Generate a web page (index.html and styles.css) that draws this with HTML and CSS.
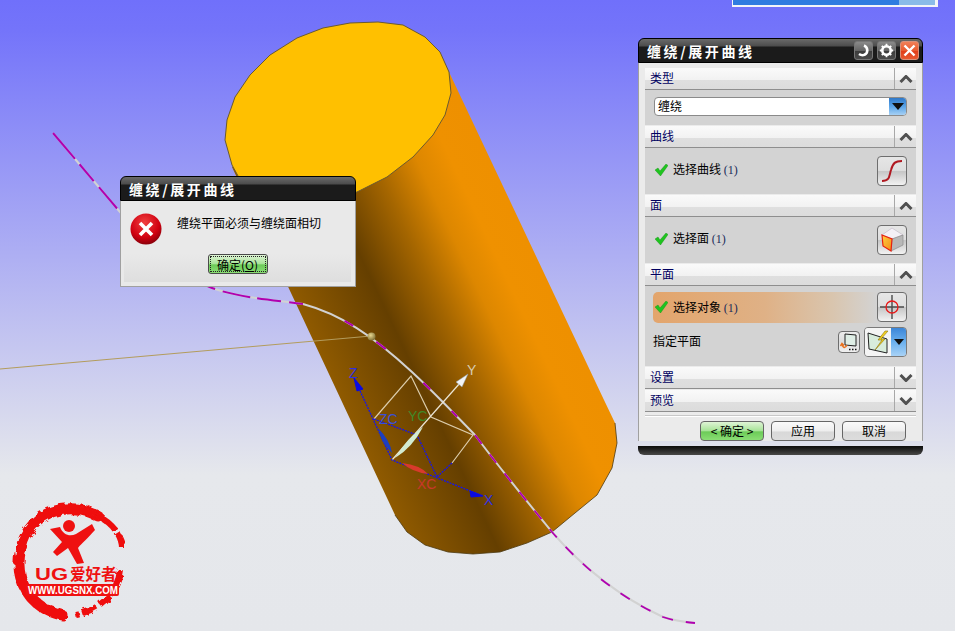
FILE: index.html
```html
<!DOCTYPE html>
<html lang="zh">
<head>
<meta charset="utf-8">
<title>缠绕/展开曲线</title>
<link rel="stylesheet" href="styles.css">
</head>
<body>
<main class="viewport">
  <svg class="scene" width="955" height="631" viewBox="0 0 955 631">
    <defs>
      <linearGradient id="bodyShade" gradientUnits="userSpaceOnUse" x1="289" y1="288" x2="503" y2="187">
        <stop offset="0" stop-color="#8f5a00"/>
        <stop offset=".33" stop-color="#653f00"/>
        <stop offset=".55" stop-color="#a56600"/>
        <stop offset=".72" stop-color="#dd8700"/>
        <stop offset=".85" stop-color="#ef9100"/>
        <stop offset="1" stop-color="#ee9000"/>
      </linearGradient>
      <radialGradient id="ball" cx=".4" cy=".35" r=".7">
        <stop offset="0" stop-color="#e8d890"/>
        <stop offset="1" stop-color="#7a6a30"/>
      </radialGradient>
      <filter id="rough" x="-10%" y="-10%" width="120%" height="120%">
        <feTurbulence type="fractalNoise" baseFrequency=".16" numOctaves="2" seed="4"/>
        <feDisplacementMap in="SourceGraphic" scale="6"/>
      </filter>
    </defs>

    <!-- cylinder -->
    <path class="cyl-body" d="M449 72 L604 400 L615 423 L617 443 L612 468 L597 495 L575 513 L552 532 L527 543 L500 552 L473 554 L448 552 L425 545 L407 532 L395 515 L380 483 L232 167 Z"/>
    <path class="cyl-rim" d="M615 423 L617 443 L612 468 L597 495 L575 513 L552 532 L527 543 L500 552 L473 554 L448 552 L425 545 L407 532 L395 515"/>
    <path class="cyl-top" d="M225 140 L227 120 L235 97 L250 75 L270 55 L297 38 L323 28 L350 23 L378 22 L403 25 L425 37 L440 52 L449 72 L451 93 L445 115 L433 135 L413 157 L387 177 L357 192 L320 202 L285 204 L262 198 L243 185 L232 165 Z"/>

    <!-- sketch line and curve -->
    <path class="ray" d="M0 369 L371 336"/>
    <path class="curve-base" d="M53 133 L120 212 C150 245 190 280 212 288 C240 298 275 300 303 304 C340 314 372 335 412 372 C440 398 460 420 475 435 C505 475 530 505 552 532 C585 570 620 597 663 617 C675 621 685 622 695 623"/>
    <path class="curve-left" d="M53 133 L120 212 C150 245 190 280 212 288 C240 298 275 300 303 304"/>
    <path class="curve-mid" d="M303 304 C340 314 372 335 412 372 C440 398 460 420 475 435"/>
    <path class="curve-right" d="M475 435 C505 475 530 505 552 532 C585 570 620 597 663 617 C675 621 685 622 695 623"/>
    <circle cx="371.500" cy="336.500" r="4" fill="url(#ball)"/>

    <!-- datum triad -->
    <path class="wire" d="M374 419 L411 376 L431 417 L473 435 L452 463"/>
    <path class="y-axis" d="M392 460 L460 383"/>
    <path class="blue-dash" d="M355 380 L392 460 L483 496 M374 419 L417 435 L437 477 L452 463"/>
    <path class="leaf-blue" d="M378 428 Q390 440 392 453 Q381 443 378 428 Z"/>
    <path class="leaf-green" d="M395 458 Q408 437 423 427 Q412 448 395 458 Z"/>
    <path class="leaf-red" d="M402 463 Q420 465 428 474 Q412 472 402 463 Z"/>
    <path class="tip-blue" d="M354 378 L363 389 L357 391 Z M470 491 L483 496 L471 497 Z"/>
    <path class="tip-white" d="M468 374 L462 387 L456 382 Z"/>
    <text class="axis-text axis-blue" x="349" y="378">Z</text>
    <text class="axis-text axis-zc" x="379" y="424">ZC</text>
    <text class="axis-text axis-green" x="408" y="421">YC</text>
    <text class="axis-text axis-red" x="417" y="489">XC</text>
    <text class="axis-text axis-blue" x="484" y="505">X</text>
    <text class="axis-text axis-tan" x="467" y="375">Y</text>

    <!-- watermark logo -->
    <g class="logo">
      <path class="logo-ring" filter="url(#rough)" d="M98 516 C70 500 30 510 21 548 C13 580 30 608 62 615"/>
      <path class="logo-ring-thin" filter="url(#rough)" d="M80 510 C105 514 122 532 122 548 M120 570 C118 592 100 610 76 615"/>
      <circle class="logo-mark" cx="69" cy="526" r="6"/>
      <path class="logo-mark" d="M50 529 L60 527 C63 535 70 537 76 534 L92 524 L95 530 C88 538 82 543 78 548 L84 563 L77 564 L68 548 L57 556 L53 552 L62 542 Z"/>
      <text class="logo-ug" x="35" y="580" textLength="33" lengthAdjust="spacingAndGlyphs">UG</text>
      <text class="logo-name" x="70" y="580">爱好者</text>
      <rect class="logo-band" x="26" y="584" width="93" height="12" rx="2"/>
      <text class="logo-url" x="28" y="594" textLength="90" lengthAdjust="spacingAndGlyphs">WWW.UGSNX.COM</text>
    </g>

    <!-- clipped window at the top edge -->
    <rect class="strip-frame" x="732" y="0" width="206" height="7"/>
    <rect class="strip-blue" x="733" y="0" width="166" height="5"/>
    <rect class="strip-sky" x="899" y="0" width="36" height="5"/>
  </svg>

  <section class="window panel">
    <header class="titlebar">
      <h1 class="title">缠绕/展开曲线</h1>
      <div class="title-tools">
        <button class="tool-btn" type="button" aria-label="重置">
          <svg width="13" height="13" viewBox="0 0 13 13"><path class="tool-stroke" d="M7 1.500 C11 3 11.500 9 7.500 10.800 C5.500 11.600 3.500 11 2 10"/></svg>
        </button>
        <button class="tool-btn" type="button" aria-label="设置">
          <svg width="15" height="15" viewBox="0 0 15 15"><circle class="tool-gear" cx="7.500" cy="7.500" r="4.200"/><path class="tool-teeth" d="M7.500 .8 V3 M7.500 12 V14.200 M.8 7.500 H3 M12 7.500 H14.200 M2.800 2.800 L4.300 4.300 M10.700 10.700 L12.200 12.200 M2.800 12.200 L4.300 10.700 M10.700 4.300 L12.200 2.800"/></svg>
        </button>
        <button class="tool-btn tool-close" type="button" aria-label="关闭">
          <svg width="13" height="13" viewBox="0 0 13 13"><path class="tool-x" d="M1.500 1.500 L11.500 11.500 M11.500 1.500 L1.500 11.500"/></svg>
        </button>
      </div>
    </header>

    <div class="panel-body">
      <div class="section">
        <div class="sec-head"><span class="sec-label">类型</span><span class="chev"><svg width="14" height="8" viewBox="0 0 14 8"><path class="chev-line" d="M1.500 7 L7 1.500 L12.500 7"/></svg></span></div>
        <div class="sec-body sec-type">
          <div class="combo"><span class="combo-text">缠绕</span><span class="combo-arrow"><svg width="12" height="7" viewBox="0 0 12 7"><path class="arrow-fill" d="M0 0 H12 L6 7 Z"/></svg></span></div>
        </div>
      </div>

      <div class="section">
        <div class="sec-head"><span class="sec-label">曲线</span><span class="chev"><svg width="14" height="8" viewBox="0 0 14 8"><path class="chev-line" d="M1.500 7 L7 1.500 L12.500 7"/></svg></span></div>
        <div class="sec-body sec-pick">
          <div class="status"><svg class="check" width="13" height="12" viewBox="0 0 13 12"><path class="check-fill" d="M0 6 L3 4 L5 7 L11 0 L13 1.500 L5.500 12 Z"/></svg><span>选择曲线 <span class="count">(1)</span></span></div>
          <button class="icon-btn" type="button" aria-label="曲线">
            <svg width="28" height="28" viewBox="0 0 28 28"><path class="s-curve" d="M4 24 C12 24 11 19 13 13 C15 6 17 4 24 4"/></svg>
          </button>
        </div>
      </div>

      <div class="section">
        <div class="sec-head"><span class="sec-label">面</span><span class="chev"><svg width="14" height="8" viewBox="0 0 14 8"><path class="chev-line" d="M1.500 7 L7 1.500 L12.500 7"/></svg></span></div>
        <div class="sec-body sec-pick">
          <div class="status"><svg class="check" width="13" height="12" viewBox="0 0 13 12"><path class="check-fill" d="M0 6 L3 4 L5 7 L11 0 L13 1.500 L5.500 12 Z"/></svg><span>选择面 <span class="count">(1)</span></span></div>
          <button class="icon-btn" type="button" aria-label="面">
            <svg width="28" height="28" viewBox="0 0 28 28">
              <defs><linearGradient id="faceHot" x1="0" y1="0" x2="1" y2="1"><stop offset="0" stop-color="#ffd040"/><stop offset="1" stop-color="#f28a18"/></linearGradient></defs>
              <path class="cube-top" d="M14 2 L25 9 L14 13 L4 9 Z"/>
              <path class="cube-right" d="M25 9 V19 L13 25 L14 13 Z"/>
              <path class="cube-left" fill="url(#faceHot)" d="M4 9 L14 13 L13 25 L5 20 Z"/>
            </svg>
          </button>
        </div>
      </div>

      <div class="section">
        <div class="sec-head"><span class="sec-label">平面</span><span class="chev"><svg width="14" height="8" viewBox="0 0 14 8"><path class="chev-line" d="M1.500 7 L7 1.500 L12.500 7"/></svg></span></div>
        <div class="sec-body sec-plane">
          <div class="pick-row">
            <div class="status status-active"><svg class="check" width="13" height="12" viewBox="0 0 13 12"><path class="check-fill" d="M0 6 L3 4 L5 7 L11 0 L13 1.500 L5.500 12 Z"/></svg><span>选择对象 <span class="count">(1)</span></span></div>
            <button class="icon-btn" type="button" aria-label="对象">
              <svg width="28" height="28" viewBox="0 0 28 28"><path class="cross" d="M2 14 H26 M14 2 V26"/><circle class="cross-ring" cx="14" cy="14" r="6"/></svg>
            </button>
          </div>
          <div class="plane-row">
            <span class="plane-label">指定平面</span>
            <button class="mini-btn" type="button" aria-label="反向">
              <svg width="20" height="20" viewBox="0 0 20 20"><path class="plane-sheet" d="M6 2 L17 3 V14 L6 13 Z"/><path class="flip" d="M8 13 C6 17 4 16 3 12 M1.500 14 L3 11.500 L5 13.500"/><path class="dots" d="M10 17.500 H11.500 M13 17.500 H14.500 M16 17.500 H17.500"/></svg>
            </button>
            <div class="plane-combo">
              <span class="plane-face">
                <svg width="24" height="24" viewBox="0 0 24 24"><path class="plane-glass" d="M2 3 L21 9 V23 L3 19 Z"/><path class="bolt" d="M19 1 L12 10 L16 10 L9 20 L19 9 L15 9 L22 1 Z"/></svg>
              </span>
              <span class="plane-arrow"><svg width="10" height="6" viewBox="0 0 10 6"><path class="arrow-fill" d="M0 0 H10 L5 6 Z"/></svg></span>
            </div>
          </div>
        </div>
      </div>

      <div class="section">
        <div class="sec-head"><span class="sec-label">设置</span><span class="chev"><svg width="14" height="8" viewBox="0 0 14 8"><path class="chev-line" d="M1.500 1 L7 6.500 L12.500 1"/></svg></span></div>
      </div>
      <div class="section">
        <div class="sec-head"><span class="sec-label">预览</span><span class="chev"><svg width="14" height="8" viewBox="0 0 14 8"><path class="chev-line" d="M1.500 1 L7 6.500 L12.500 1"/></svg></span></div>
      </div>

      <div class="actions">
        <button class="btn btn-ok" type="button">&lt; 确定 &gt;</button>
        <button class="btn" type="button">应用</button>
        <button class="btn" type="button">取消</button>
      </div>
    </div>
    <footer class="panel-foot"></footer>
  </section>

  <section class="window alert">
    <header class="titlebar">
      <h2 class="title">缠绕/展开曲线</h2>
    </header>
    <div class="alert-body">
      <div class="alert-msg">
        <svg class="alert-icon" width="32" height="32" viewBox="0 0 32 32">
          <defs><radialGradient id="errRed" cx=".45" cy=".3" r=".8"><stop offset="0" stop-color="#f04040"/><stop offset=".6" stop-color="#d00010"/><stop offset="1" stop-color="#6a0008"/></radialGradient></defs>
          <circle cx="16" cy="16" r="15.500" fill="url(#errRed)"/>
          <path class="err-x" d="M10 10 L22 22 M22 10 L10 22"/>
        </svg>
        <p class="alert-text">缠绕平面必须与缠绕面相切</p>
      </div>
      <div class="alert-foot">
        <button class="btn-alert" type="button"><span class="btn-focus">确定(<u>O</u>)</span></button>
      </div>
    </div>
  </section>
</main>
</body>
</html>
```
FILE: styles.css
```css
* { box-sizing: border-box; }

html, body { margin: 0; padding: 0; }

body {
  font-family: "Noto Sans CJK SC", "Liberation Sans", sans-serif;
  font-size: 12px;
  color: #000;
}

.viewport {
  position: relative;
  width: 955px;
  height: 631px;
  overflow: hidden;
  background: linear-gradient(#7070fb 0, #7474fa 30px, #e6e8ec 475px, #e5e7eb 631px);
}

.scene { position: absolute; left: 0; top: 0; display: block; }

/* scene */
.cyl-body { fill: url(#bodyShade); }
.cyl-rim { fill: none; stroke: #4d3a12; stroke-width: .8; }
.cyl-top { fill: #ffc000; stroke: #6b5a30; stroke-width: 1; }
.ray { stroke: #b39c5c; stroke-width: 1; fill: none; }
.curve-base { fill: none; stroke: #d2d2d2; stroke-width: 2; }
.curve-left { fill: none; stroke: #b000b0; stroke-width: 2; stroke-dasharray: 34 7 22 8 28 7 24 8 20 6; }
.curve-mid { fill: none; stroke: #b000b0; stroke-width: 2; stroke-dasharray: 0 45 10 28 12 50 10 30 8 200; }
.curve-right { fill: none; stroke: #b000b0; stroke-width: 1.800; stroke-dasharray: 11 13; }
.wire { fill: none; stroke: #dccdac; stroke-width: 1.200; }
.y-axis { fill: none; stroke: #ece6d6; stroke-width: 1.200; }
.blue-dash { fill: none; stroke: #1414f0; stroke-width: 1.300; stroke-dasharray: 2 1; }
.leaf-blue { fill: #1c3fc0; }
.leaf-green { fill: #d3ecd0; }
.leaf-red { fill: #d83a2c; }
.tip-blue { fill: #0a0ae0; stroke: #0a0ae0; }
.tip-white { fill: #f2f4f6; stroke: #8a9aa8; stroke-width: .5; }
.axis-text { font-family: "Liberation Sans", sans-serif; font-size: 14px; }
.axis-blue { fill: #3030e0; }
.axis-zc { fill: #3a50d8; }
.axis-green { fill: #3f8a28; }
.axis-red { fill: #c8382c; }
.axis-tan { fill: #d8cdb0; }

/* logo */
.logo-ring { fill: none; stroke: #ef1111; stroke-width: 11; stroke-linecap: round; }
.logo-ring-thin { fill: none; stroke: #ef1111; stroke-width: 6; stroke-dasharray: 16 3 22 4; }
.logo-mark { fill: #ef1111; }
.logo-ug { fill: #ef1111; font-family: "Liberation Sans", sans-serif; font-size: 16px; font-weight: 700; }
.logo-name { fill: #ef1111; font-family: "Noto Sans CJK SC", sans-serif; font-size: 15.500px; font-weight: 700; }
.logo-band { fill: #ef1111; }
.logo-url { fill: #fff; font-family: "Liberation Sans", sans-serif; font-size: 10px; font-weight: 700; }

.strip-frame { fill: #f2f4f8; }
.strip-blue { fill: #2f7ce0; }
.strip-sky { fill: #8abbe8; }

/* windows */
.window { position: absolute; }

.panel {
  left: 638px;
  top: 38px;
  width: 285px;
  height: 416px;
  display: flex;
  flex-direction: column;
}

.alert {
  left: 120px;
  top: 176px;
  width: 236px;
  height: 111px;
  display: flex;
  flex-direction: column;
}

.titlebar {
  flex: none;
  height: 25px;
  display: flex;
  align-items: center;
  justify-content: space-between;
  padding: 0 3px 0 8px;
  border: 1px solid #000;
  border-radius: 6px 6px 0 0;
  background: linear-gradient(#6a6a6a 0, #4c4c4c 7px, #1b1b1b 8px, #1b1b1b 100%);
}

.title {
  margin: 1px 0 0;
  font-size: 14px;
  line-height: 18px;
  font-weight: 700;
  letter-spacing: 2.600px;
  color: #fff;
}

.title-tools { display: flex; gap: 4px; }

.tool-btn {
  width: 19px;
  height: 19px;
  padding: 0;
  display: flex;
  align-items: center;
  justify-content: center;
  border: 1px solid #777;
  border-radius: 3px;
  background: linear-gradient(#8a8a8a, #666 50%, #3c3c3c 52%, #4a4a4a);
}

.tool-close {
  border-color: #d89078;
  background: linear-gradient(#f08058, #e85a2e 50%, #e03c18 52%, #e85a30);
}

.tool-stroke { fill: none; stroke: #fff; stroke-width: 2.600; }
.tool-gear { fill: none; stroke: #fff; stroke-width: 2.600; }
.tool-teeth { fill: none; stroke: #fff; stroke-width: 1.800; }
.tool-x { fill: none; stroke: #fff; stroke-width: 2.400; }

/* panel body */
.panel-body {
  flex: 1;
  display: flex;
  flex-direction: column;
  gap: 1px;
  padding: 5px 6px 0;
  background: #ebebeb;
  border-left: 1px solid #a0a0a0;
  border-right: 1px solid #a0a0a0;
}

.section { flex: none; }

.sec-head {
  height: 22px;
  display: flex;
  align-items: stretch;
  justify-content: space-between;
  border-bottom: 1px solid #8e8e8e;
  background: linear-gradient(#fafafa, #f2f2f2 55%, #dfdfdf 58%, #dcdcdc);
}

.sec-label {
  padding-left: 5px;
  font-size: 12px;
  line-height: 20px;
  color: #000060;
}

.chev {
  width: 22px;
  display: flex;
  align-items: center;
  justify-content: center;
  border-left: 1px solid #a8a8a8;
}

.chev-line { fill: none; stroke: #505050; stroke-width: 3; }

.sec-body { background: #d3d3d3; }

.sec-type { height: 35px; padding: 7px 9px 0; }

.sec-pick {
  height: 46px;
  display: flex;
  align-items: center;
  justify-content: space-between;
  padding: 0 9px 0 10px;
}

.sec-pick .status { margin-bottom: 3px; }

.sec-plane { height: 80px; padding: 5px 9px 0 8px; }

.combo {
  height: 19px;
  display: flex;
  align-items: stretch;
  justify-content: space-between;
  border: 1px solid #8a8a8a;
  border-radius: 4px;
  background: #fff;
  overflow: hidden;
}

.combo-text { padding-left: 3px; line-height: 16px; }

.combo-arrow {
  width: 17px;
  display: flex;
  align-items: center;
  justify-content: center;
  background: linear-gradient(#2f78c8, #5aa4e8 50%, #a6d0f4);
}

.arrow-fill { fill: #101010; }

.status { display: flex; align-items: center; gap: 5px; line-height: 16px; }

.check { flex: none; }
.check-fill { fill: #1fc41f; stroke: #0f8f0f; stroke-width: .4; }
.count { color: #1a2a5a; font-family: "Liberation Serif", serif; }

.icon-btn {
  width: 30px;
  height: 30px;
  padding: 0;
  display: flex;
  align-items: center;
  justify-content: center;
  border: 1px solid #6e6e6e;
  border-radius: 4px;
  background: linear-gradient(#e6e6e6, #dedede 48%, #c6c6c6 52%, #f2f2f2);
}

.s-curve { fill: none; stroke: #b01820; stroke-width: 2; }
.cube-top { fill: #f4f0f6; stroke: #c4bcc8; stroke-width: .7; }
.cube-right { fill: #b8b8b8; stroke: #8c8c8c; stroke-width: .7; }
.cube-left { stroke: #e82010; stroke-width: 1.200; }
.cross { fill: none; stroke: #4a4a4a; stroke-width: 1.400; }
.cross-ring { fill: none; stroke: #e81818; stroke-width: 1.300; }

.pick-row {
  height: 32px;
  display: flex;
  align-items: center;
  margin-bottom: 4px;
}

.status-active {
  flex: 1;
  height: 31px;
  padding-left: 2px;
  border-radius: 5px 0 0 5px;
  background: linear-gradient(90deg, #e3a56c, #dfb186 50%, #d9c5ae 80%, #d3d3d3);
}

.plane-row { display: flex; align-items: center; }

.plane-label { flex: 1; line-height: 28px; padding-bottom: 2px; }

.mini-btn {
  width: 22px;
  height: 22px;
  margin-right: 4px;
  padding: 0;
  display: flex;
  align-items: center;
  justify-content: center;
  border: 1px solid #6e6e6e;
  border-radius: 4px;
  background: linear-gradient(#ececec, #dcdcdc 50%, #f0f0f0);
}

.plane-sheet { fill: #dfeee6; stroke: #222; stroke-width: 1; }
.flip { fill: none; stroke: #e8701c; stroke-width: 1.500; }
.dots { fill: none; stroke: #111; stroke-width: 1.500; }

.plane-combo {
  width: 43px;
  height: 30px;
  display: flex;
  border: 1px solid #7a7a7a;
  border-radius: 4px;
  overflow: hidden;
}

.plane-face {
  width: 26px;
  display: flex;
  align-items: center;
  justify-content: center;
  background: #f4f4f4;
}

.plane-glass { fill: #d8ecdc; stroke: #222; stroke-width: 1; }
.bolt { fill: #f4d020; stroke: #8a7410; stroke-width: .6; }

.plane-arrow {
  flex: 1;
  display: flex;
  align-items: center;
  justify-content: center;
  background: linear-gradient(#3c86d8, #6ab0ee 50%, #a8d2f6);
}

.actions {
  display: flex;
  justify-content: flex-end;
  gap: 7px;
  height: 26px;
  margin-top: 2px;
  padding: 5px 10px 0 0;
  border-top: 1px solid #c8c8c8;
  box-shadow: inset 0 1px 0 #fff;
}

.btn {
  width: 64px;
  height: 20px;
  padding: 0 0 2px;
  font: inherit;
  font-size: 12px;
  line-height: 15px;
  color: #000;
  border: 1px solid #666;
  border-radius: 4px;
  background: linear-gradient(#fafafa, #eeeeee 50%, #d8d8d8 55%, #dcdcdc);
}

.btn-ok {
  background: linear-gradient(#dff4d6, #a8e498 48%, #6ccb58 55%, #8ade74);
}

.panel-foot {
  flex: none;
  height: 9px;
  margin-top: 5px;
  border-radius: 0 0 6px 6px;
  background: linear-gradient(#0c0c0c, #1a1a1a 25%, #484848);
}

/* alert */
.alert-body {
  flex: 1;
  display: flex;
  flex-direction: column;
  padding: 0 4px 4px 3px;
  background: #e9e9e9;
  border: 1px solid #a0a0a0;
  border-top: 0;
}

.alert-msg {
  height: 53px;
  display: flex;
  gap: 15px;
  padding: 12px 0 0 6px;
}

.alert-icon { flex: none; }
.err-x { fill: none; stroke: #fff; stroke-width: 3.600; }

.alert-text {
  margin: 2px 0 0;
  font-size: 12px;
  line-height: 16px;
}

.alert-foot {
  flex: 1;
  display: flex;
  justify-content: center;
  align-items: flex-start;
  background: linear-gradient(#e9e9e9, #dedede);
}

.btn-alert {
  width: 60px;
  height: 20px;
  padding: 1px;
  font: inherit;
  color: #000;
  border: 1px solid #4a4a4a;
  border-radius: 3px;
  background: linear-gradient(#dff4d6, #a8e498 48%, #6ccb58 55%, #8ade74);
}

.btn-focus {
  display: block;
  height: 16px;
  line-height: 15px;
  border: 1px dotted #222;
}
```
